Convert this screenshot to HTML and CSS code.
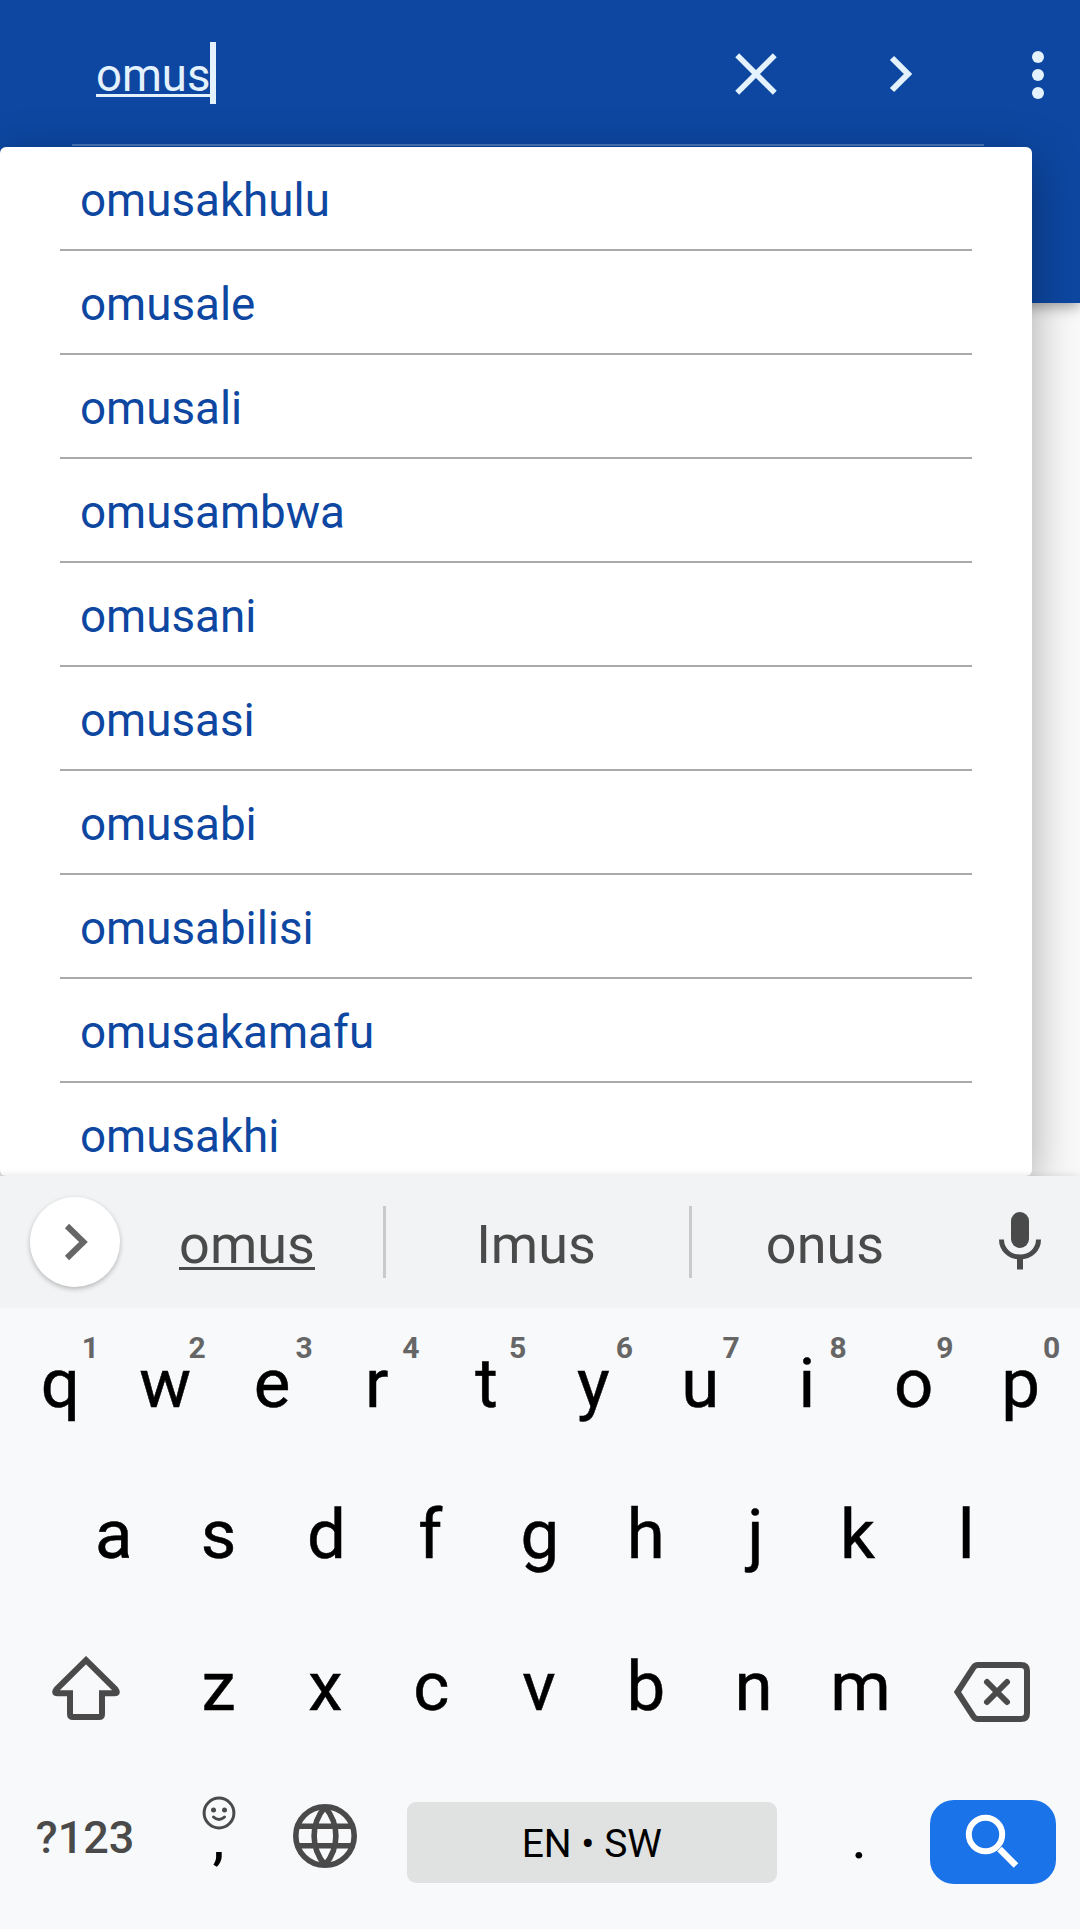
FILE: index.html
```html
<!DOCTYPE html>
<html lang="en">
<head>
<meta charset="utf-8">
<title>Dictionary search</title>
<link rel="stylesheet" href="styles.css">
</head>
<body>
<div class="screen">
  <header class="appbar">
    <div class="search"><span class="query">omus</span><span class="caret"></span></div>
    <svg class="clear" width="44" height="44" viewBox="0 0 44 44"><path d="M3.2 3.2 40.8 40.8M40.8 3.2 3.2 40.8"/></svg>
    <svg class="go" width="24" height="38" viewBox="0 0 24 38"><path d="M3 3 19 19 3 35"/></svg>
    <svg class="more" width="12" height="48" viewBox="0 0 12 48"><circle cx="6" cy="6" r="6"/><circle cx="6" cy="24" r="6"/><circle cx="6" cy="42" r="6"/></svg>
  </header>
  <main class="content">
    <ul class="results">
      <li>omusakhulu</li>
      <li>omusale</li>
      <li>omusali</li>
      <li>omusambwa</li>
      <li>omusani</li>
      <li>omusasi</li>
      <li>omusabi</li>
      <li>omusabilisi</li>
      <li>omusakamafu</li>
      <li>omusakhi</li>
    </ul>
  </main>
  <section class="keyboard">
    <div class="suggestions">
      <div class="expand"><svg width="24" height="38" viewBox="0 0 24 38"><path d="M3 3 19.5 19 3 35"/></svg></div>
      <div class="word first"><u>omus</u></div>
      <div class="word middle">Imus</div>
      <div class="word last">onus</div>
      <svg class="mic" width="42" height="58" viewBox="0 0 42 58"><rect x="12" y="0" width="18" height="36" rx="9"/><path d="M2.5 27.500C2.500 37.500 10.500 45 21 45S39.500 37.500 39.500 27.500"/><rect x="18" y="46" width="6" height="11.500"/></svg>
    </div>
    <div class="row">
      <span class="key lead">q<sup>1</sup></span><span class="key near">w<sup>2</sup></span><span class="key near">e<sup>3</sup></span><span class="key far">r<sup>4</sup></span><span class="key">t<sup>5</sup></span><span class="key">y<sup>6</sup></span><span class="key">u<sup>7</sup></span><span class="key">i<sup>8</sup></span><span class="key">o<sup>9</sup></span><span class="key">p<sup>0</sup></span>
    </div>
    <div class="row">
      <span class="key lead">a</span><span class="key near">s</span><span class="key">d</span><span class="key far">f</span><span class="key">g</span><span class="key near">h</span><span class="key after">j</span><span class="key far">k</span><span class="key near">l</span>
    </div>
    <div class="row">
      <span class="key wide shift"><svg width="68" height="64" viewBox="0 0 68 64"><path d="M34 4.200 63.500 33.300Q66.500 37.300 62.500 37.300H50V58Q50 61 47 61H21Q18 61 18 58V37.300H5.500Q1.500 37.300 4.500 33.300Z"/></svg></span>
      <span class="key near">z</span><span class="key near">x</span><span class="key mid">c</span><span class="key near">v</span><span class="key near">b</span><span class="key">n</span><span class="key">m</span>
      <span class="key wide backspace"><svg width="76" height="60" viewBox="0 0 76 60"><path d="M3.500 30 19.500 5.500Q21 3 24 3H67Q73 3 73 9V51Q73 57 67 57H24Q21 57 19.500 54.500Z"/><path class="round" d="M33 20 53 40M53 20 33 40"/></svg></span>
    </div>
    <div class="row bottom">
      <span class="key wide symbols">?123</span>
      <span class="key comma"><svg width="34" height="34" viewBox="0 0 34 34"><circle class="ring" cx="17" cy="17" r="14.900"/><circle class="eye" cx="11.500" cy="14" r="2.500"/><circle class="eye" cx="22.500" cy="14" r="2.500"/><path d="M11.500 21Q17 26 22.500 21"/></svg><b>,</b></span>
      <span class="key globe"><svg width="64" height="64" viewBox="0 0 64 64"><circle cx="32" cy="32" r="29.200"/><path d="M5 22.200H59M5 41.800H59M32 3C17.500 20 17.500 44 32 61M32 3C46.500 20 46.500 44 32 61"/></svg></span>
      <span class="key space">EN • SW</span>
      <span class="key period">.</span>
      <span class="key enter"><svg width="54" height="54" viewBox="0 0 54 54"><circle cx="20.500" cy="20.500" r="16.700"/><path d="M34.500 35 51 51.500"/></svg></span>
    </div>
  </section>
</div>
</body>
</html>
```

FILE: styles.css
```css
* { box-sizing: border-box; }
body { margin: 0; font-family: Roboto, sans-serif; background: #fafafa; }
svg { display: block; flex: none; }
path { fill: none; }

.screen {
  width: 1080px;
  height: 1929px;
  display: flex;
  flex-direction: column;
  overflow: hidden;
}

/* Blue app bar with the search field */
.appbar {
  height: 303px;
  flex: none;
  display: flex;
  align-items: flex-start;
  background: #0d47a1;
  color: #e3f2fd;
  box-shadow: 0 3px 14px rgba(0, 0, 0, .4);
}
.appbar svg { fill: #e3f2fd; stroke: #e3f2fd; stroke-width: 5.5; }
.search {
  width: 912px;
  height: 146px;
  margin: 0 -250px 0 72px;
  padding: 42px 0 0 24px;
  display: flex;
  border-bottom: 2px solid rgba(227, 242, 253, .28);
}
.query {
  height: 55px;
  font-size: 45.5px;
  line-height: 67px;
  border-bottom: 3px solid #e3f2fd;
}
.caret { width: 6px; height: 62px; background: #e3f2fd; }
.clear { margin-top: 52px; }
.appbar .go { margin: 55px 0 0 111px; stroke-width: 6; }
.appbar .more { margin: 51px 0 0 119px; stroke: none; }

/* Autocomplete popup, pulled up over the app bar */
.content { height: 873px; flex: none; }
.results {
  position: relative;
  width: 1032px;
  height: 1029px;
  margin: -156px 0 0;
  padding: 0 60px;
  list-style: none;
  background: #fff;
  border-radius: 6px;
  box-shadow: 0 14px 48px rgba(0, 0, 0, .34);
  overflow: hidden;
}
.results li {
  height: 104px;
  padding: 3px 20px 0;
  font-size: 45.75px;
  line-height: 102px;
  color: #0d47a1;
  border-bottom: 2px solid #aaa;
}
.results li:last-child { border: 0; }

/* On-screen keyboard */
.keyboard {
  position: relative;
  flex: 1;
  background: #f8f9fb;
  color: #000;
  box-shadow: 0 0 8px rgba(0, 0, 0, .12);
}
.suggestions {
  height: 132px;
  padding: 0 39px 0 30px;
  display: flex;
  align-items: center;
  background: #f1f3f4;
  color: #4a4a4a;
}
.expand {
  width: 90px;
  height: 90px;
  padding-left: 2px;
  display: flex;
  align-items: center;
  justify-content: center;
  border-radius: 50%;
  background: #fff;
  box-shadow: 0 2px 5px rgba(0, 0, 0, .25);
}
.expand path { stroke: #666; stroke-width: 6; }
.word {
  width: 306px;
  height: 72px;
  padding-top: 3px;
  border-right: 3px solid #c8cacb;
  text-align: center;
  font-size: 54px;
  line-height: 72px;
}
.word.first { width: 266px; padding-right: 9px; }
.word.middle { padding-right: 3px; }
.word.last { width: 266px; border: 0; }
.word u {
  display: inline-block;
  height: 61px;
  line-height: 72px;
  text-decoration: none;
  border-bottom: 3px solid #4a4a4a;
}
.mic { margin: 0 0 2px 41px; fill: #4a4a4a; }
.mic path { stroke: #4a4a4a; stroke-width: 5; }

.row {
  height: 151.5px;
  padding: 0 6px;
  display: flex;
  justify-content: center;
  align-items: center;
}
.key {
  position: relative;
  width: 106.8px;
  flex: none;
  display: flex;
  justify-content: center;
  font-size: 69px;
  line-height: 78px;
  -webkit-text-stroke: .5px;
}
.lead { padding-left: 2px; }
.near { padding-right: 2px; }
.mid { padding-right: 4px; }
.far { padding-right: 6px; }
.after { padding-left: 4px; }
.key sup {
  position: absolute;
  left: 64.4px;
  top: -15px;
  width: 40px;
  text-align: center;
  font-size: 30px;
  font-weight: 700;
  line-height: 36px;
  color: #666;
  -webkit-text-stroke: 0;
}
.wide { width: 160.2px; }
.wide svg { stroke: #4a4a4a; stroke-width: 6; }
.shift { padding-top: 3px; }
.backspace { padding: 10px 4px 0 0; }
.round { stroke-linecap: round; }

.bottom { justify-content: flex-start; }
.bottom .key { -webkit-text-stroke: 0; }
.bottom .symbols { font-size: 45px; font-weight: 500; color: #4a4a4a; padding-right: 2px; }
.comma {
  height: 76px;
  padding-right: 2px;
  flex-direction: column;
  justify-content: flex-start;
  align-items: center;
  font-size: 54px;
  line-height: 30px;
}
.comma svg { margin-top: -4px; fill: none; stroke: #4a4a4a; stroke-width: 3; }
.comma .eye { fill: #4a4a4a; stroke: none; }
.comma path { stroke-linecap: round; }
.bottom .comma { font-size: 54px; line-height: 30px; }
.comma b { margin-top: -5px; font-weight: 500; }
.globe { margin-top: -4px; padding-right: 2px; }
.globe svg { fill: none; stroke: #4a4a4a; stroke-width: 5.600; }
.space {
  width: 370px;
  height: 81px;
  margin: 8px 0 0 27px;
  border-radius: 9px;
  background: #e0e2e1;
  font-size: 39px;
  line-height: 85px;
}
.period { width: 153px; font-size: 60px; padding-left: 12px; }
.enter {
  width: 126px;
  height: 84px;
  margin-top: 8px;
  border-radius: 24px;
  background: #1a73e8;
}
.enter svg { fill: none; stroke: #fff; stroke-width: 6; margin: 14px 0 0 -1px; }
.enter path { stroke-width: 6.5; }
```
